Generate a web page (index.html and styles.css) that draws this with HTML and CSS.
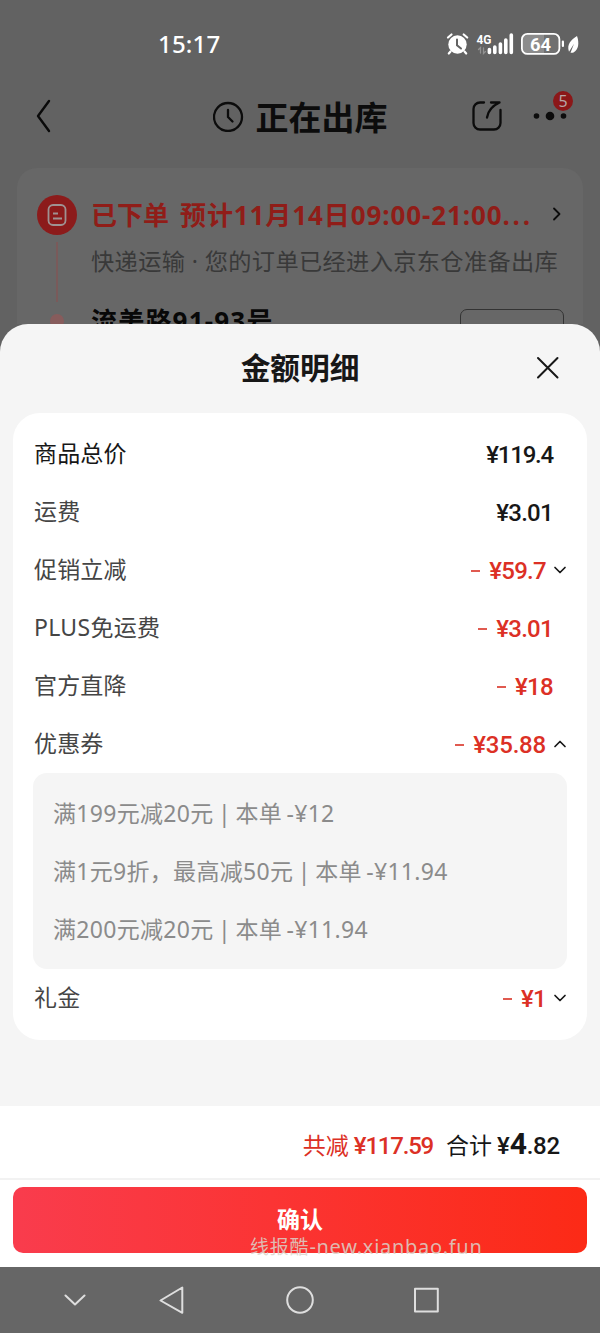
FILE: index.html
```html
<!DOCTYPE html>
<html lang="zh-CN">
<head>
<meta charset="utf-8">
<title>金额明细</title>
<link rel="stylesheet" href="styles.css">
</head>
<body>
<div class="screen">
  <header class="status">
    <span class="time">15:17</span>
    <svg class="status-icons" width="138" height="26" viewBox="0 0 138 26" fill="none">
      <g stroke="#fff" stroke-linecap="round">
        <circle cx="12.5" cy="13.5" r="9.2" fill="#fff" stroke="none"/>
        <path d="M3 6.500 6.500 3.500M18.700 3.500l3.500 3M5.500 20.500l-1.700 2M19.500 20.500l1.700 2" stroke-width="2.200"/>
        <path d="M12 8.500v5.700l4 3.300" stroke="#636363" stroke-width="2"/>
        <path d="M44.400 18.500v3M49.800 16v5.500M55.400 13v8.500M60.800 9v12.500M66.300 4v17.500" stroke-width="3.600"/>
        <path d="M35.500 22v-5.500l-2 2M38.500 17v5.500l2-2" stroke="#929292" stroke-width="1.300"/>
      </g>
      <text class="net" x="31.500" y="13" textLength="15" lengthAdjust="spacingAndGlyphs">4G</text>
      <rect x="76.900" y="2.900" width="37.500" height="20" rx="5.500" fill="#707070"/>
      <path d="M82 2.900h17v20H82a5 5 0 0 1-5-5v-10a5 5 0 0 1 5-5z" fill="#8c8c8c"/>
      <rect x="76.900" y="2.900" width="37.500" height="20" rx="5.500" stroke="#fff" stroke-width="1.800"/>
      <text class="battery" x="85" y="19.800" textLength="21" lengthAdjust="spacingAndGlyphs">64</text>
      <path d="M117.900 10.500v4.500" stroke="#fff" stroke-width="2.200" stroke-linecap="round"/>
      <path d="M132 5c2.500 7 1.500 14-3.500 16.500-1 .4-2 .5-3 .2l3.500-9-5 8C121.500 13 126 9 132 5z" fill="#fff"/>
    </svg>
  </header>

  <nav class="topbar">
    <svg class="back" width="24" height="40" viewBox="0 0 24 40" fill="none" stroke="#0a0a0a" stroke-width="2.400" stroke-linecap="round" stroke-linejoin="round"><path d="M17 6 6 21 17 36"/></svg>
    <div class="heading">
      <svg width="32" height="32" viewBox="0 0 32 32" fill="none" stroke="#0c0c0c" stroke-width="2.300" stroke-linecap="round" stroke-linejoin="round"><circle cx="15" cy="17" r="14"/><path d="M15 10v7l4.500 4.500"/></svg>
      <h1>正在出库</h1>
    </div>
    <div class="actions">
      <svg width="32" height="32" viewBox="0 0 32 32" fill="none" stroke="#0c0c0c" stroke-width="2.300" stroke-linecap="round" stroke-linejoin="round"><path d="M13 2.500H9a6.500 6.500 0 0 0-6.500 6.500v14A6.500 6.500 0 0 0 9 29.500h14a6.500 6.500 0 0 0 6.500-6.500V10M20 2.500h8.500C21 6 17 10.500 16 17.500"/></svg>
      <div class="more">
        <svg width="34" height="12" viewBox="0 0 34 12" fill="#0c0c0c"><circle cx="3.500" cy="6" r="2.800"/><circle cx="17" cy="6" r="4.300"/><circle cx="30.500" cy="6" r="2.800"/></svg>
        <span class="badge">5</span>
      </div>
    </div>
  </nav>

  <section class="order">
    <div class="rail">
      <svg width="40" height="40" viewBox="0 0 40 40" fill="none"><circle cx="20" cy="20" r="20" fill="#8c1b1b"/><rect x="11.500" y="10" width="17" height="20" rx="4.500" stroke="#9f9292" stroke-width="1.800"/><path d="M16 18.500h5M16 23.500h9" stroke="#9f9292" stroke-width="1.800"/></svg>
      <i class="line"></i>
      <i class="dot"></i>
    </div>
    <div class="progress">
      <div class="eta"><span class="eta-state">已下单</span><span class="eta-time">预计11月14日09:00-21:00<span class="dots">...</span></span>
        <svg width="10" height="16" viewBox="0 0 10 16" fill="none" stroke="#0c0c0c" stroke-width="1.800" stroke-linecap="round" stroke-linejoin="round"><path d="m2 2.500 5.500 5.500L2 13.500"/></svg>
      </div>
      <p class="shipping">快递运输 · 您的订单已经进入京东仓准备出库</p>
      <div class="address"><strong>流美路91-93号</strong><span class="edit"></span></div>
    </div>
  </section>

  <main class="sheet">
    <header class="sheet-head">
      <h2>金额明细</h2>
      <svg class="close" width="24" height="24" viewBox="0 0 24 24" fill="none" stroke="#171717" stroke-width="2" stroke-linecap="round"><path d="m2 2 19.500 19.500M21.500 2 2 21.500"/></svg>
    </header>
    <section class="card">
      <div class="row strong"><span>商品总价</span><b class="price tight">¥119.4</b></div>
      <div class="row"><span>运费</span><b class="price">¥3.01</b></div>
      <div class="row folded"><span>促销立减</span><b class="price red"><i class="minus"></i>¥59.7</b><svg class="chev" viewBox="0 0 14 10"><path d="m2 2.500 5 5 5-5"/></svg></div>
      <div class="row"><span class="plus">PLUS免运费</span><b class="price red"><i class="minus"></i>¥3.01</b></div>
      <div class="row"><span>官方直降</span><b class="price red"><i class="minus"></i>¥18</b></div>
      <div class="row folded"><span>优惠券</span><b class="price red wide"><i class="minus"></i>¥35.88</b><svg class="chev" viewBox="0 0 14 10"><path d="m2 7.500 5-5 5 5"/></svg></div>
      <ul class="coupons">
        <li>满199元减20元 | 本单 -¥12</li>
        <li>满1元9折，最高减50元 | 本单 -¥11.94</li>
        <li>满200元减20元 | 本单 -¥11.94</li>
      </ul>
      <div class="row folded"><span>礼金</span><b class="price red"><i class="minus"></i>¥1</b><svg class="chev" viewBox="0 0 14 10"><path d="m2 2.500 5 5 5-5"/></svg></div>
    </section>
    <footer class="footer">
      <div class="totals">
        <span class="saved">共减<b class="price tight">¥117.59</b></span>
        <span class="sum">合计<b class="price">¥<em>4</em>.82</b></span>
      </div>
      <div class="confirm-wrap">
        <button class="confirm">确认</button>
        <span class="watermark">线报酷<span class="site">-new.xianbao.fun</span></span>
      </div>
    </footer>
  </main>

  <nav class="system">
    <svg width="600" height="66" viewBox="0 0 600 66" fill="none" stroke="#dedede" stroke-width="2" stroke-linecap="round" stroke-linejoin="round">
      <path d="m65.500 28.500 9.500 9 9.500-9M182.300 20.500v25.300L160.500 33.500zM415 21.800h22.800v22.800H415z"/><circle cx="300" cy="33" r="12.800"/>
    </svg>
  </nav>
</div>
</body>
</html>
```
FILE: styles.css
```css
* { box-sizing: border-box; }
body, h1, h2, p, ul { margin: 0; padding: 0; }
body { font-family: "Noto Sans", "Noto Sans CJK SC", sans-serif; }
svg { display: block; flex: none; }
.screen { width: 600px; height: 1333px; background: #626262; display: flex; flex-direction: column; overflow: hidden; }

.status { height: 80px; display: flex; justify-content: space-between; align-items: flex-start; padding: 29px 17px 0 158px; color: #fff; }
.time { font-size: 24px; line-height: 29px; font-weight: 500; letter-spacing: .2px; }
.status-icons { margin-top: 2px; }
.net { font: 700 13px Roboto, sans-serif; fill: #fff; }
.battery { font: 700 18px Roboto, sans-serif; fill: #fff; }

.topbar { height: 88px; display: grid; grid-template-columns: 180px 1fr 180px; align-items: start; color: #0c0c0c; }
.back { margin: 15px 0 0 32px; }
.heading { display: flex; align-items: center; justify-content: center; gap: 11px; height: 72px; }
.heading h1 { font-size: 33px; line-height: 44px; font-weight: 700; padding-top: 4px; }
.actions { display: flex; align-items: center; height: 72px; padding-left: 51px; gap: 30px; }
.more { position: relative; }
.badge { position: absolute; left: 20px; top: -19px; width: 20px; height: 20px; border-radius: 50%; background: #8b1718; color: #b7a5a5; font-size: 16px; line-height: 20px; text-align: center; }

.order { height: 156px; flex: none; margin: 0 17px; padding: 0 18px 0 20px; background: #676767; border-radius: 20px 20px 0 0; display: flex; gap: 14px; overflow: hidden; }
.rail { width: 40px; padding-top: 27px; display: flex; flex-direction: column; align-items: center; flex: none; }
.line { width: 2px; height: 60px; flex: none; margin-top: 7px; background: #7a5a5a; }
.dot { width: 14px; height: 14px; flex: none; margin-top: 12px; border-radius: 50%; background: #875c5c; }
.progress { flex: 1; min-width: 0; }
.eta { margin-top: 28px; height: 36px; display: flex; align-items: center; white-space: nowrap; color: #901d18; font-size: 26px; font-weight: 700; }
.eta-state { width: 89px; }
.eta-time { width: 372px; letter-spacing: .9px; }
.dots { letter-spacing: 2.800px; }
.shipping { margin-top: 13px; height: 32px; line-height: 32px; font-size: 23.200px; letter-spacing: .38px; white-space: nowrap; color: #393939; }
.address { display: flex; justify-content: space-between; margin-top: 32px; color: #080808; font-size: 26px; line-height: 26px; letter-spacing: 1.200px; }
.address strong { margin-top: -1px; }
.edit { width: 104px; height: 40px; margin-right: 1px; border: 1px solid #333; border-radius: 7px; }

.sheet { height: 943px; flex: none; background: #f5f5f5; border-radius: 28px 28px 0 0; display: flex; flex-direction: column; }
.sheet-head { position: relative; height: 89px; text-align: center; color: #171717; }
.sheet-head h2 { font-size: 29.700px; line-height: 87px; }
.close { position: absolute; right: 40px; top: 32px; }
.card { height: 627px; margin: 0 13px; padding: 12px 20px 13px; border-radius: 27px; background: #fff; }
.row { height: 58px; display: flex; align-items: center; padding-right: 14px; font-size: 23px; color: #454545; }
.row > span { flex: 1; padding: 0 0 4px 1px; letter-spacing: .15px; }
.row .plus { letter-spacing: .3px; }
.row.strong { color: #171717; }
.row.folded { padding-right: 0; }
.price { display: flex; align-items: baseline; font: 500 24px/30px Roboto, sans-serif; letter-spacing: -.7px; color: #171717; }
.row .price { padding-top: 1px; }
.tight { letter-spacing: -1.200px; }
.wide { letter-spacing: -.2px; }
.red, .saved .price { color: #dc3025; }
.minus { width: 9px; height: 2px; background: #e05a50; align-self: center; margin-right: 9px; }
.chev { width: 14px; height: 10px; margin-left: 7px; fill: none; stroke: #171717; stroke-width: 1.700; stroke-linecap: round; stroke-linejoin: round; }
.coupons { list-style: none; height: 196px; padding: 11px 20px; border-radius: 14px; background: #f5f5f5; font-size: 23px; color: #8b8b8b; }
.coupons li { height: 58px; line-height: 58px; letter-spacing: .3px; word-spacing: -1.800px; white-space: nowrap; }

.footer { height: 161px; margin-top: auto; background: #fff; }
.totals { height: 74px; border-bottom: 2px solid #f2f2f2; display: flex; justify-content: flex-end; align-items: center; gap: 13px; padding: 4px 40px 0 0; font-size: 23px; }
.saved, .sum { display: flex; align-items: baseline; gap: 5px; }
.saved { color: #dc3025; }
.sum { color: #171717; }
.sum .price { letter-spacing: -.2px; }
.price em { font-style: normal; font-size: 30px; font-weight: 700; }
.confirm-wrap { position: relative; padding: 7px 13px 0; }
.confirm { display: block; width: 100%; height: 66px; padding: 0 0 4px; border: 0; border-radius: 10px; background: linear-gradient(90deg, #f93c4d, #fb3434 45%, #fc2a16); color: #fff; font: 700 23px "Noto Sans CJK SC", sans-serif; }
.watermark { position: absolute; left: 250px; top: 53px; font-size: 19px; line-height: 28px; letter-spacing: .8px; color: rgba(218, 211, 202, .85); white-space: nowrap; }
.site { font-size: 20px; letter-spacing: .7px; }
.system { height: 66px; flex: none; background: #666; }
```
